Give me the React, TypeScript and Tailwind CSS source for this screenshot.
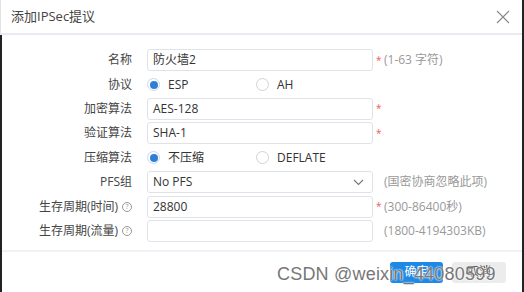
import { ReactNode } from 'react'

const font = { fontFamily: '"Open Sans", "Noto Sans CJK SC", sans-serif' }

function Help() {
	return (
		<span className="ml-[4px] inline-flex h-[10px] w-[10px] items-center justify-center rounded-full border border-[#999] text-[7px] leading-none text-[#999]">
			?
		</span>
	)
}

function Radio({ checked, label }: { checked?: boolean; label: string }) {
	return (
		<div className="flex items-center">
			{checked ? (
				<span className="flex h-[13px] w-[13px] items-center justify-center rounded-full border border-[#c9d8ea] bg-white">
					<span className="h-[8px] w-[8px] rounded-full bg-[#2f7fd6]" />
				</span>
			) : (
				<span className="h-[13px] w-[13px] rounded-full border border-[#cfd3d8] bg-white" />
			)}
			<span className="ml-[8px] text-[12px] text-[#333]">{label}</span>
		</div>
	)
}

function Input({ value }: { value?: string }) {
	return (
		<div className="flex h-[22px] w-[226px] items-center rounded-[3px] border border-[#dfe3e8] bg-white px-[5px] text-[12px] text-[#333]">
			{value}
		</div>
	)
}

function Row({
	label,
	help,
	children,
	star,
	hint,
}: {
	label: string
	help?: boolean
	children: ReactNode
	star?: boolean
	hint?: string
}) {
	return (
		<div className="flex h-[24.4px] items-center">
			<div className="flex w-[130px] items-center justify-end text-[12px] text-[#444]">
				{label}
				{help && <Help />}
			</div>
			<div className="ml-[15px] w-[226px]">{children}</div>
			<div className="ml-[3px] w-[8px] text-[10px] text-[#f25c5c]">{star ? '*' : ''}</div>
			{hint && <div className="text-[12px] text-[#999]">{hint}</div>}
		</div>
	)
}

export default function App() {
	return (
		<div className="relative h-[292px] w-[524px] overflow-hidden bg-white" style={font}>
			<div className="flex h-full flex-col border-r-2 border-[#222]">
				{/* header */}
				<div className="flex h-[33px] items-center justify-between border-l border-[#e3e3e3] px-[10px]">
					<span className="text-[13px] text-[#444]">添加IPSec提议</span>
					<svg width="14" height="14" viewBox="0 0 14 14" className="mr-[2px]">
						<path d="M1 1 L13 13 M13 1 L1 13" stroke="#888" strokeWidth="1.1" />
					</svg>
				</div>
				<div className="h-[2px] bg-[#e8ecf1]" />

				{/* body */}
				<div className="flex flex-1 flex-col border-l-2 border-[#222]">
					<div className="pt-[13px]">
						<Row label="名称" star hint="(1-63 字符)">
							<Input value="防火墙2" />
						</Row>
						<Row label="协议">
							<div className="flex">
								<div className="w-[109px]">
									<Radio checked label="ESP" />
								</div>
								<Radio label="AH" />
							</div>
						</Row>
						<Row label="加密算法" star>
							<Input value="AES-128" />
						</Row>
						<Row label="验证算法" star>
							<Input value="SHA-1" />
						</Row>
						<Row label="压缩算法">
							<div className="flex">
								<div className="w-[109px]">
									<Radio checked label="不压缩" />
								</div>
								<Radio label="DEFLATE" />
							</div>
						</Row>
						<Row label="PFS组" hint="(国密协商忽略此项)">
							<div className="flex h-[22px] w-[226px] items-center justify-between rounded-[3px] border border-[#dfe3e8] bg-white pl-[5px] pr-[8px] text-[12px] text-[#333]">
								No PFS
								<svg width="11" height="7" viewBox="0 0 11 7">
									<path d="M1 1 L5.5 5.5 L10 1" fill="none" stroke="#777" strokeWidth="1.1" />
								</svg>
							</div>
						</Row>
						<Row label="生存周期(时间)" help star hint="(300-86400秒)">
							<Input value="28800" />
						</Row>
						<Row label="生存周期(流量)" help hint="(1800-4194303KB)">
							<Input />
						</Row>
					</div>

					<div className="mt-auto">
						<div className="h-[2px] bg-[#f0f2f5]" />
						<div className="flex h-[40px] items-center justify-end gap-[9px] pr-[16px]">
							<button className="h-[21px] w-[53px] rounded-[3px] bg-[#1e88e5] text-[12px] text-white">
								确定
							</button>
							<button className="h-[21px] w-[54px] rounded-[3px] bg-[#ececec] text-[12px] text-[#333]">
								取消
							</button>
						</div>
					</div>
				</div>
			</div>

			{/* watermark */}
			<div
				className="absolute left-[277px] top-[261px] text-[18px] tracking-[0.2px] text-[#777]"
				style={{ fontFamily: '"Liberation Sans", sans-serif', textShadow: '0 0 2px #fff, 0 0 2px #fff' }}
			>
				CSDN @weixin_44080599
			</div>
		</div>
	)
}
